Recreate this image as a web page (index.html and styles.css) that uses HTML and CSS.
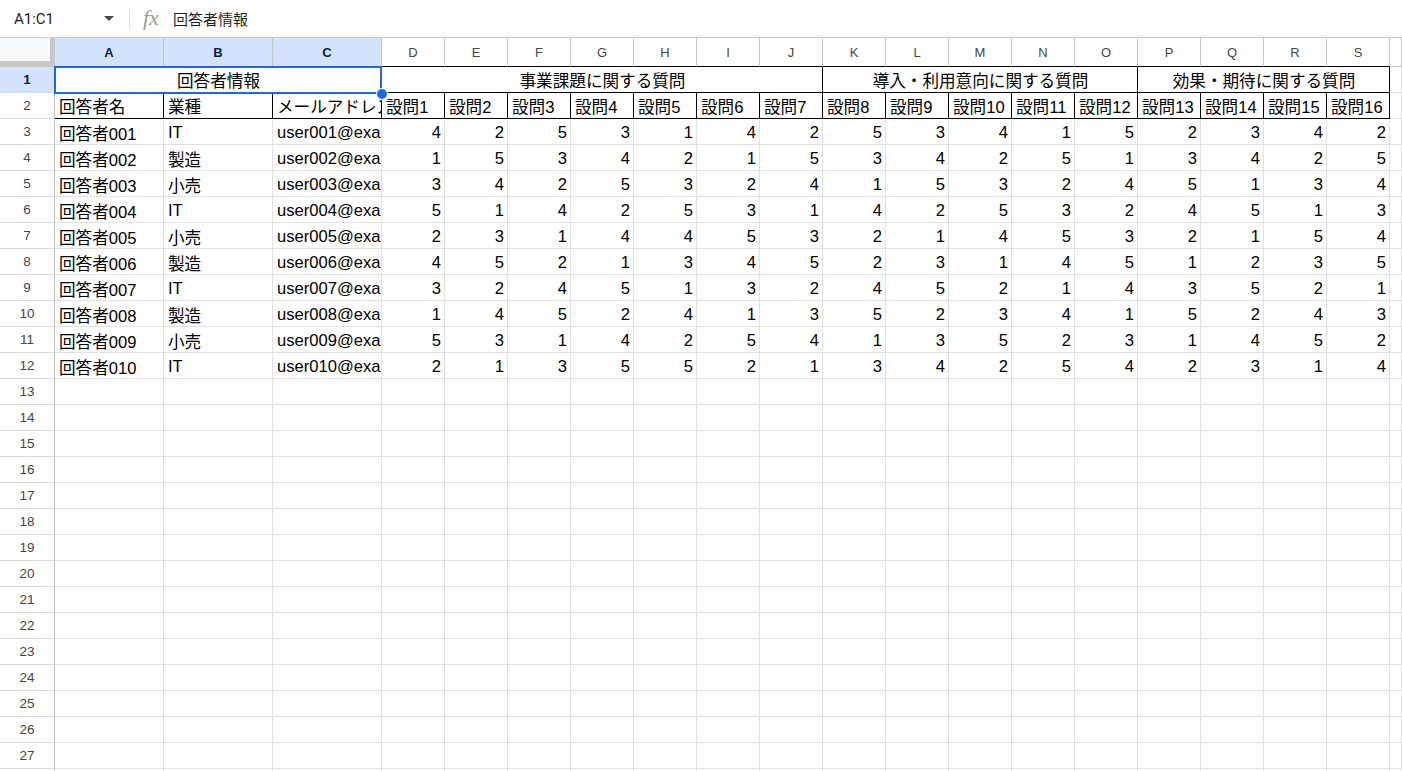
FILE: index.html
```html
<!DOCTYPE html>
<html lang="ja">
<head>
    <meta charset="UTF-8">
    <meta name="viewport" content="width=device-width, initial-scale=1.0">
    <title>アンケート回答</title>
    <link rel="stylesheet" href="styles.css">
</head>
<body>
    <div class="formula-bar">
        <div class="name-box">A1:C1<span class="caret"></span></div>
        <div class="sep"></div>
        <div class="fx">fx</div>
        <div class="formula">回答者情報</div>
    </div>

    <div class="sheet">
        <!-- column headers -->
        <div class="row head">
            <div class="corner"></div>
            <div class="hl">A</div><div class="hl">B</div><div class="hl">C</div>
            <div class="top">D</div><div class="top">E</div><div class="top">F</div><div class="top">G</div>
            <div class="top">H</div><div class="top">I</div><div class="top">J</div><div class="top">K</div>
            <div class="top">L</div><div class="top">M</div><div class="top">N</div><div class="top">O</div>
            <div class="top">P</div><div class="top">Q</div><div class="top">R</div><div class="top">S</div>
            <div></div>
        </div>

        <div class="row">
            <div class="rh hl">1</div>
            <div class="span3 center active">回答者情報<span class="sel"><span class="handle"></span></span></div>
            <div class="span7 center blk">事業課題に関する質問</div>
            <div class="span5 center blk">導入・利用意向に関する質問</div>
            <div class="span4 center blk">効果・期待に関する質問</div>
            <div></div>
        </div>

        <div class="row labels">
            <div class="rh">2</div>
            <div>回答者名</div><div>業種</div><div>メールアドレス</div>
            <div>設問1</div><div>設問2</div><div>設問3</div><div>設問4</div><div>設問5</div><div>設問6</div><div>設問7</div>
            <div>設問8</div><div>設問9</div><div>設問10</div><div>設問11</div><div>設問12</div>
            <div>設問13</div><div>設問14</div><div>設問15</div><div>設問16</div>
            <div class="plain"></div>
        </div>

        <div class="row data"><div class="rh">3</div><div>回答者001</div><div>IT</div><div>user001@example.com</div>
            <div class="num">4</div><div class="num">2</div><div class="num">5</div><div class="num">3</div><div class="num">1</div><div class="num">4</div><div class="num">2</div><div class="num">5</div>
            <div class="num">3</div><div class="num">4</div><div class="num">1</div><div class="num">5</div><div class="num">2</div><div class="num">3</div><div class="num">4</div><div class="num">2</div><div></div></div>
        <div class="row data"><div class="rh">4</div><div>回答者002</div><div>製造</div><div>user002@example.com</div>
            <div class="num">1</div><div class="num">5</div><div class="num">3</div><div class="num">4</div><div class="num">2</div><div class="num">1</div><div class="num">5</div><div class="num">3</div>
            <div class="num">4</div><div class="num">2</div><div class="num">5</div><div class="num">1</div><div class="num">3</div><div class="num">4</div><div class="num">2</div><div class="num">5</div><div></div></div>
        <div class="row data"><div class="rh">5</div><div>回答者003</div><div>小売</div><div>user003@example.com</div>
            <div class="num">3</div><div class="num">4</div><div class="num">2</div><div class="num">5</div><div class="num">3</div><div class="num">2</div><div class="num">4</div><div class="num">1</div>
            <div class="num">5</div><div class="num">3</div><div class="num">2</div><div class="num">4</div><div class="num">5</div><div class="num">1</div><div class="num">3</div><div class="num">4</div><div></div></div>
        <div class="row data"><div class="rh">6</div><div>回答者004</div><div>IT</div><div>user004@example.com</div>
            <div class="num">5</div><div class="num">1</div><div class="num">4</div><div class="num">2</div><div class="num">5</div><div class="num">3</div><div class="num">1</div><div class="num">4</div>
            <div class="num">2</div><div class="num">5</div><div class="num">3</div><div class="num">2</div><div class="num">4</div><div class="num">5</div><div class="num">1</div><div class="num">3</div><div></div></div>
        <div class="row data"><div class="rh">7</div><div>回答者005</div><div>小売</div><div>user005@example.com</div>
            <div class="num">2</div><div class="num">3</div><div class="num">1</div><div class="num">4</div><div class="num">4</div><div class="num">5</div><div class="num">3</div><div class="num">2</div>
            <div class="num">1</div><div class="num">4</div><div class="num">5</div><div class="num">3</div><div class="num">2</div><div class="num">1</div><div class="num">5</div><div class="num">4</div><div></div></div>
        <div class="row data"><div class="rh">8</div><div>回答者006</div><div>製造</div><div>user006@example.com</div>
            <div class="num">4</div><div class="num">5</div><div class="num">2</div><div class="num">1</div><div class="num">3</div><div class="num">4</div><div class="num">5</div><div class="num">2</div>
            <div class="num">3</div><div class="num">1</div><div class="num">4</div><div class="num">5</div><div class="num">1</div><div class="num">2</div><div class="num">3</div><div class="num">5</div><div></div></div>
        <div class="row data"><div class="rh">9</div><div>回答者007</div><div>IT</div><div>user007@example.com</div>
            <div class="num">3</div><div class="num">2</div><div class="num">4</div><div class="num">5</div><div class="num">1</div><div class="num">3</div><div class="num">2</div><div class="num">4</div>
            <div class="num">5</div><div class="num">2</div><div class="num">1</div><div class="num">4</div><div class="num">3</div><div class="num">5</div><div class="num">2</div><div class="num">1</div><div></div></div>
        <div class="row data"><div class="rh">10</div><div>回答者008</div><div>製造</div><div>user008@example.com</div>
            <div class="num">1</div><div class="num">4</div><div class="num">5</div><div class="num">2</div><div class="num">4</div><div class="num">1</div><div class="num">3</div><div class="num">5</div>
            <div class="num">2</div><div class="num">3</div><div class="num">4</div><div class="num">1</div><div class="num">5</div><div class="num">2</div><div class="num">4</div><div class="num">3</div><div></div></div>
        <div class="row data"><div class="rh">11</div><div>回答者009</div><div>小売</div><div>user009@example.com</div>
            <div class="num">5</div><div class="num">3</div><div class="num">1</div><div class="num">4</div><div class="num">2</div><div class="num">5</div><div class="num">4</div><div class="num">1</div>
            <div class="num">3</div><div class="num">5</div><div class="num">2</div><div class="num">3</div><div class="num">1</div><div class="num">4</div><div class="num">5</div><div class="num">2</div><div></div></div>
        <div class="row data"><div class="rh">12</div><div>回答者010</div><div>IT</div><div>user010@example.com</div>
            <div class="num">2</div><div class="num">1</div><div class="num">3</div><div class="num">5</div><div class="num">5</div><div class="num">2</div><div class="num">1</div><div class="num">3</div>
            <div class="num">4</div><div class="num">2</div><div class="num">5</div><div class="num">4</div><div class="num">2</div><div class="num">3</div><div class="num">1</div><div class="num">4</div><div></div></div>

        <!-- empty rows -->
        <div class="row"><div class="rh">13</div><div></div><div></div><div></div><div></div><div></div><div></div><div></div><div></div><div></div><div></div><div></div><div></div><div></div><div></div><div></div><div></div><div></div><div></div><div></div><div></div></div>
        <div class="row"><div class="rh">14</div><div></div><div></div><div></div><div></div><div></div><div></div><div></div><div></div><div></div><div></div><div></div><div></div><div></div><div></div><div></div><div></div><div></div><div></div><div></div><div></div></div>
        <div class="row"><div class="rh">15</div><div></div><div></div><div></div><div></div><div></div><div></div><div></div><div></div><div></div><div></div><div></div><div></div><div></div><div></div><div></div><div></div><div></div><div></div><div></div><div></div></div>
        <div class="row"><div class="rh">16</div><div></div><div></div><div></div><div></div><div></div><div></div><div></div><div></div><div></div><div></div><div></div><div></div><div></div><div></div><div></div><div></div><div></div><div></div><div></div><div></div></div>
        <div class="row"><div class="rh">17</div><div></div><div></div><div></div><div></div><div></div><div></div><div></div><div></div><div></div><div></div><div></div><div></div><div></div><div></div><div></div><div></div><div></div><div></div><div></div><div></div></div>
        <div class="row"><div class="rh">18</div><div></div><div></div><div></div><div></div><div></div><div></div><div></div><div></div><div></div><div></div><div></div><div></div><div></div><div></div><div></div><div></div><div></div><div></div><div></div><div></div></div>
        <div class="row"><div class="rh">19</div><div></div><div></div><div></div><div></div><div></div><div></div><div></div><div></div><div></div><div></div><div></div><div></div><div></div><div></div><div></div><div></div><div></div><div></div><div></div><div></div></div>
        <div class="row"><div class="rh">20</div><div></div><div></div><div></div><div></div><div></div><div></div><div></div><div></div><div></div><div></div><div></div><div></div><div></div><div></div><div></div><div></div><div></div><div></div><div></div><div></div></div>
        <div class="row"><div class="rh">21</div><div></div><div></div><div></div><div></div><div></div><div></div><div></div><div></div><div></div><div></div><div></div><div></div><div></div><div></div><div></div><div></div><div></div><div></div><div></div><div></div></div>
        <div class="row"><div class="rh">22</div><div></div><div></div><div></div><div></div><div></div><div></div><div></div><div></div><div></div><div></div><div></div><div></div><div></div><div></div><div></div><div></div><div></div><div></div><div></div><div></div></div>
        <div class="row"><div class="rh">23</div><div></div><div></div><div></div><div></div><div></div><div></div><div></div><div></div><div></div><div></div><div></div><div></div><div></div><div></div><div></div><div></div><div></div><div></div><div></div><div></div></div>
        <div class="row"><div class="rh">24</div><div></div><div></div><div></div><div></div><div></div><div></div><div></div><div></div><div></div><div></div><div></div><div></div><div></div><div></div><div></div><div></div><div></div><div></div><div></div><div></div></div>
        <div class="row"><div class="rh">25</div><div></div><div></div><div></div><div></div><div></div><div></div><div></div><div></div><div></div><div></div><div></div><div></div><div></div><div></div><div></div><div></div><div></div><div></div><div></div><div></div></div>
        <div class="row"><div class="rh">26</div><div></div><div></div><div></div><div></div><div></div><div></div><div></div><div></div><div></div><div></div><div></div><div></div><div></div><div></div><div></div><div></div><div></div><div></div><div></div><div></div></div>
        <div class="row"><div class="rh">27</div><div></div><div></div><div></div><div></div><div></div><div></div><div></div><div></div><div></div><div></div><div></div><div></div><div></div><div></div><div></div><div></div><div></div><div></div><div></div><div></div></div>
        <div class="row"><div class="rh">28</div><div></div><div></div><div></div><div></div><div></div><div></div><div></div><div></div><div></div><div></div><div></div><div></div><div></div><div></div><div></div><div></div><div></div><div></div><div></div><div></div></div>
    </div>
</body>
</html>
```

FILE: styles.css
```css
* { box-sizing: border-box; }
body { margin: 0; overflow: hidden; background: #fff; color: #000; font-family: "Liberation Sans", "Noto Sans CJK JP", sans-serif; }

/* formula bar */
.formula-bar { height: 38px; display: flex; align-items: center; border-bottom: 1px solid #c7c7c7; font-family: Roboto, "Noto Sans CJK JP", sans-serif; color: #1f1f1f; }
.name-box { width: 129px; padding-left: 14px; display: flex; align-items: center; font-size: 15px; }
.caret { margin-left: auto; margin-right: 15px; border-left: 5px solid transparent; border-right: 5px solid transparent; border-top: 5px solid #444746; }
.sep { width: 1px; height: 20px; background: #e0e0e0; }
.fx { width: 30px; margin-left: 13px; font-family: "Liberation Serif", serif; font-style: italic; font-size: 22px; color: #9a9a9a; line-height: 1; padding-bottom: 2px; }
.formula { font-size: 15px; }

/* grid */
.row { display: grid; grid-template-columns: 55px repeat(3, 109px) repeat(16, 63px) 1fr; height: 26px; }
.row > div {
    display: flex;
    align-items: center;
    padding: 0 3px 0 4px;
    border-right: 1px solid #e1e1e1;
    border-bottom: 1px solid #e1e1e1;
    font-size: 16.6px;
    white-space: nowrap;
    overflow: hidden;
}
.row > .num { justify-content: flex-end; }
.row > .center { justify-content: center; }
.data > div:not(.rh) { padding-top: 2px; }

.head { height: 29px; }
.head > div { justify-content: center; font-size: 13px; color: #444746; border-right-color: #c7c7c7; border-bottom-color: #c7c7c7; padding: 0; }
.head > .top { border-bottom-color: #000; }
.head > .corner { background: #f8f9fa; border-right: 5px solid #c7c7c7; border-bottom: 6px solid #c7c7c7; }

.row > .rh { justify-content: center; padding: 0; font-size: 13.5px; color: #444746; border-right-color: #c0c0c0; border-bottom-color: #dadada; }
.row > .hl { background: #d3e3fd; color: #041e49; font-weight: bold; }

.span3 { grid-column: span 3; }
.span7 { grid-column: span 7; }
.span5 { grid-column: span 5; }
.span4 { grid-column: span 4; }
.row > .blk { border-right-color: #000; border-bottom-color: #000; }
.labels > div:not(.rh):not(.plain) { border-right-color: #000; border-bottom-color: #000; }

/* active selection */
.row > .active { position: relative; overflow: visible; }
.sel { position: absolute; top: -1px; left: -1px; right: -1px; bottom: -2px; border: 2px solid #1a6ae0; }
.handle { position: absolute; right: -7px; bottom: -7px; width: 10px; height: 10px; border-radius: 50%; background: #1a6ae0; box-shadow: 0 0 0 1px #fff; }
```
